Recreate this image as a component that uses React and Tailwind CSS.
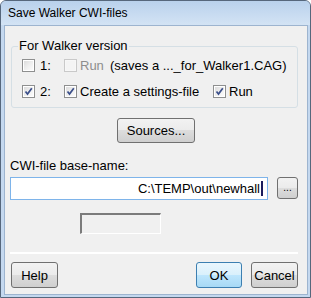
import React from 'react';

/** Win7-style 13px checkbox; disabled variant is paler. */
function CheckBox({ checked = false, disabled = false }) {
  return (
    <span
      className={`inline-flex h-[13px] w-[13px] shrink-0 items-center justify-center border ${
        disabled ? 'border-[#c9c9c9] bg-[#f7f7f7]' : 'border-[#8e8f8f] bg-white'
      }`}
    >
      <span
        className={`flex h-[9px] w-[9px] items-center justify-center ${
          disabled
            ? 'bg-[#f4f4f4]'
            : 'bg-gradient-to-br from-[#dcdcdc] via-[#eeeeee] to-[#fbfbfb]'
        }`}
      >
        {checked && (
          <svg viewBox="0 0 9 9" className="h-[9px] w-[9px]" aria-hidden>
            <polyline
              points="1.5,4.5 3.5,7 7.8,1.2"
              fill="none"
              stroke="#3b4f8a"
              strokeWidth="1.7"
            />
          </svg>
        )}
      </span>
    </span>
  );
}

function WinButton({ children, className = '', isDefault = false }) {
  return (
    <div
      className={`flex items-center justify-center rounded-[3px] border ${
        isDefault
          ? 'border-[#3c7fb1] bg-[linear-gradient(#eaf6fd_0%,#d9f0fc_50%,#bee6fd_50%,#a7d9f5_100%)]'
          : 'border-[#707070] bg-[linear-gradient(#f2f2f2_0%,#ebebeb_50%,#dddddd_50%,#cfcfcf_100%)]'
      } ${className}`}
    >
      {children}
    </div>
  );
}

export default function App() {
  return (
    <div
      className="flex h-[298px] w-[311px] flex-col rounded-t-[6px] border border-[#56677c] bg-[#c4d8ef] text-[13px] leading-[15px] text-black"
      style={{ fontFamily: '"Liberation Sans", Arial, sans-serif' }}
    >
      {/* title bar */}
      <div className="flex h-[24px] shrink-0 items-center rounded-t-[5px] bg-[linear-gradient(#b9d1ec,#c9dcf1_60%,#d3e3f4)] pl-[7px] pt-[1px] text-[12px] text-black">
        Save Walker CWI-files
      </div>

      <div className="ml-[3px] mr-[2px] h-[270px] border border-[#9db4cf] bg-[#f0f0f0]">
        {/* group box */}
        <div className="relative ml-[6px] mt-[20px] h-[62px] w-[287px] rounded-[3px] border border-[#d5dfe5]">
          <span className="absolute left-[6px] top-[-9px] bg-[#f0f0f0] px-[1px]">For Walker version</span>

          <div className="ml-[10px] mt-[12px] flex h-[13px] items-center">
            <div className="flex w-[42px] items-center">
              <CheckBox />
              <span className="ml-[5px]">1:</span>
            </div>
            <div className="flex w-[46px] items-center">
              <CheckBox disabled />
              <span className="ml-[3px] text-[#8d8d8d]">Run</span>
            </div>
            <span>(saves a ..._for_Walker1.CAG)</span>
          </div>

          <div className="ml-[10px] mt-[13px] flex h-[13px] items-center">
            <div className="flex w-[42px] items-center">
              <CheckBox checked />
              <span className="ml-[5px]">2:</span>
            </div>
            <div className="flex w-[149px] items-center">
              <CheckBox checked />
              <span className="ml-[3px]">Create a settings-file</span>
            </div>
            <CheckBox checked />
            <span className="ml-[3px]">Run</span>
          </div>
        </div>

        <WinButton className="ml-[112px] mt-[10px] h-[25px] w-[78px]">Sources...</WinButton>

        <div className="ml-[5px] mt-[15px]">CWI-file base-name:</div>

        <div className="mt-[4px] flex items-start">
          <div className="ml-[5px] flex h-[23px] w-[258px] items-center justify-end border border-[#7eb4ea] bg-white pr-[4px]">
            <span>C:\TEMP\out\newhall</span>
            <span className="ml-[1px] h-[15px] w-[2px] bg-[#1b1b5c]" />
          </div>
          <WinButton className="ml-[9px] h-[22px] w-[21px] pb-[2px] text-[10px]">...</WinButton>
        </div>

        <div className="ml-[75px] mt-[13px] h-[21px] w-[81px] border-b border-l-2 border-r border-t-2 border-b-white border-l-[#7b7b7b] border-r-white border-t-[#7b7b7b] bg-[#f0f0f0]" />

        <div className="ml-[5px] mt-[18px] h-[2px] w-[288px] bg-white" />

        <div className="mt-[8px] flex items-start">
          <WinButton className="ml-[6px] h-[26px] w-[47px]">Help</WinButton>
          <WinButton isDefault className="ml-[138px] h-[26px] w-[46px]">OK</WinButton>
          <WinButton className="ml-[9px] h-[26px] w-[47px]">Cancel</WinButton>
        </div>
      </div>
    </div>
  );
}
